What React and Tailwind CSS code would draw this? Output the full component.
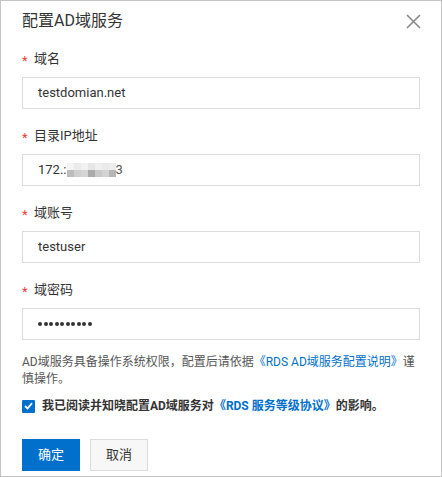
import React from "react";

const font = { fontFamily: '"Roboto", "Noto Sans CJK SC", sans-serif' };

function Label({ children }) {
  return (
    <div className="flex items-center h-[20px] text-[13px] text-[#333]">
      <span className="text-[#e8403a] w-[12px] text-[13px] leading-none pt-[3px]">*</span>
      <span>{children}</span>
    </div>
  );
}

function Field({ value, children }) {
  return (
    <div className="mt-[8px] h-[32px] border border-[#dcdcdc] flex items-center px-[15px] text-[13px] text-[#333]">
      {children || value}
    </div>
  );
}

// masked IP digits drawn as a coarse mosaic
const mosaicTop = ["#f4f4f4", "#ebebeb", "#f1f1f1", "#e6e6e6", "#efefef", "#e9e9e9", "#ededed"];
const mosaicBottom = ["#bcbcbc", "#cfcfcf", "#d5d5d5", "#ababab", "#c9c9c9", "#d3d3d3", "#b6b6b6"];

function Mosaic() {
  return (
    <span className="inline-flex flex-col">
      <span className="flex">
        {mosaicTop.map((c, i) => (
          <span key={i} className="block w-[7px] h-[7px]" style={{ background: c }} />
        ))}
      </span>
      <span className="flex">
        {mosaicBottom.map((c, i) => (
          <span key={i} className="block w-[7px] h-[7px]" style={{ background: c }} />
        ))}
      </span>
    </span>
  );
}

function PasswordDots({ count }) {
  return (
    <span className="flex gap-[1.5px]">
      {Array.from({ length: count }).map((_, i) => (
        <span key={i} className="block w-[4px] h-[4px] rounded-full bg-[#333]" />
      ))}
    </span>
  );
}

export default function App() {
  return (
    <div className="w-[442px] h-[477px] bg-white border border-[#c4c4c4] relative" style={font}>
      <div className="h-[40px] flex items-center justify-between pl-[21px] pr-[20px]">
        <span className="text-[16px] text-[#333]">配置AD域服务</span>
        <svg width="15" height="15" viewBox="0 0 15 15" className="mt-[1px]">
          <path d="M1 1 L14 14 M14 1 L1 14" stroke="#888" strokeWidth="1.6" fill="none" />
        </svg>
      </div>

      <div className="px-[21px] pt-[8px]">
        <Label>域名</Label>
        <Field value="testdomian.net" />

        <div className="mt-[17px]">
          <Label>目录IP地址</Label>
          <Field>
            <span className="flex items-center">
              <span>172.:</span>
              <Mosaic />
              <span className="text-[#555]">3</span>
            </span>
          </Field>
        </div>

        <div className="mt-[17px]">
          <Label>域账号</Label>
          <Field value="testuser" />
        </div>

        <div className="mt-[17px]">
          <Label>域密码</Label>
          <Field>
            <PasswordDots count={10} />
          </Field>
        </div>

        <p className="mt-[14px] text-[12px] leading-[17px] text-[#555] pr-[4px]">
          AD域服务具备操作系统权限，配置后请依据
          <span className="text-[#0070cc]">《RDS AD域服务配置说明》</span>谨慎操作。
        </p>

        <div className="mt-[8px] flex items-center h-[20px]">
          <span className="w-[13px] h-[13px] bg-[#0070cc] flex items-center justify-center rounded-[1px]">
            <svg width="9" height="8" viewBox="0 0 9 8">
              <path d="M1 4 L3.5 6.5 L8 1.2" stroke="#fff" strokeWidth="1.8" fill="none" />
            </svg>
          </span>
          <span className="ml-[7px] text-[12px] font-bold text-[#333]">
            我已阅读并知晓配置AD域服务对<span className="text-[#0070cc]">《RDS 服务等级协议》</span>的影响。
          </span>
        </div>

        <div className="mt-[23px] flex gap-[10px]">
          <button className="w-[58px] h-[32px] bg-[#0070cc] text-white text-[13px]">确定</button>
          <button className="w-[58px] h-[32px] bg-[#f7f7f7] border border-[#dcdcdc] text-[#333] text-[13px]">取消</button>
        </div>
      </div>
    </div>
  );
}
